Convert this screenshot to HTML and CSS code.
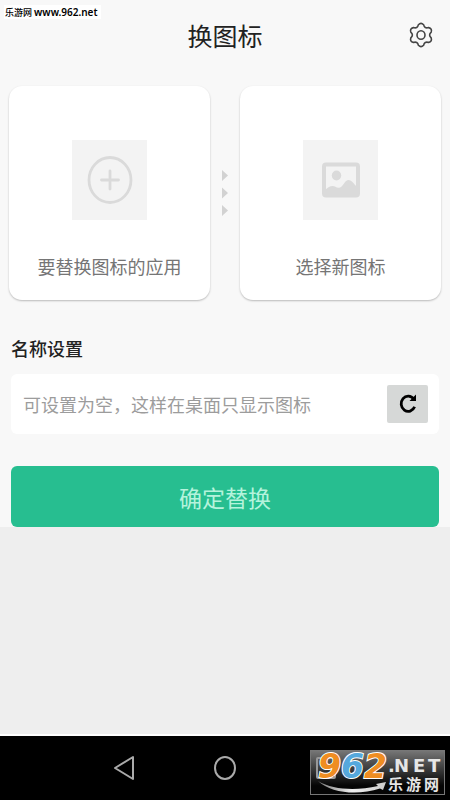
FILE: index.html
```html
<!DOCTYPE html>
<html lang="zh-CN">
<head>
<meta charset="utf-8">
<meta name="viewport" content="width=device-width, initial-scale=1">
<title>换图标</title>
<link rel="stylesheet" href="styles.css">
</head>
<body>
<div class="site-tag">乐游网 <span class="site-url">www.962.net</span></div>
<main class="panel">
  <header class="header">
    <h1 class="title">换图标</h1>
    <button class="settings" type="button" aria-label="设置">
      <svg width="24" height="26" viewBox="0 0 24 26" fill="none" stroke="#444" stroke-width="1.6" stroke-linejoin="round">
        <path d="M9.4 2.7Q12 0 14.600 2.700Q15.500 6.900 19.600 5.600Q23.300 6.500 22.200 10.100Q19 13 22.200 15.900Q23.300 19.500 19.600 20.400Q15.500 19.100 14.600 23.300Q12 26 9.400 23.300Q8.500 19.100 4.400 20.400Q.7 19.500 1.800 15.900Q5 13 1.800 10.100Q.7 6.500 4.400 5.600Q8.500 6.900 9.400 2.700Z"/>
        <ellipse cx="12" cy="13" rx="4" ry="4.3"/>
      </svg>
    </button>
  </header>

  <section class="cards">
    <button class="card" type="button">
      <span class="tile">
        <svg width="46" height="50" viewBox="0 0 46 50" fill="none" stroke="#dadada" stroke-width="2.8" stroke-linecap="round">
          <ellipse cx="23" cy="25" rx="21" ry="22.500"/>
          <path d="M14.500 25H31.500M23 16V34"/>
        </svg>
      </span>
      <span class="card-label">要替换图标的应用</span>
    </button>
    <svg class="arrows" width="6" height="46" viewBox="0 0 6 46" fill="#d2d2d2">
      <path d="M0 0L6 5.500L0 11ZM0 17.500L6 23L0 28.500ZM0 35L6 40.500L0 46Z"/>
    </svg>
    <button class="card" type="button">
      <span class="tile">
        <svg width="38" height="36" viewBox="0 0 38 36">
          <rect x="2" y="2.500" width="34" height="31" rx="2" fill="none" stroke="#dadada" stroke-width="4"/>
          <ellipse cx="14.500" cy="13.500" rx="4.700" ry="5" fill="#dadada"/>
          <path fill="#dadada" d="M3 28C6 25.500 8 24 10.500 24C13 24 15 26.500 18 25.500C21 24.500 23 18 26.500 18C30 18 32 22 35 25V34H3Z"/>
        </svg>
      </span>
      <span class="card-label">选择新图标</span>
    </button>
  </section>

  <form class="form">
    <label class="form-label" for="name">名称设置</label>
    <div class="field">
      <input class="field-input" id="name" type="text" placeholder="可设置为空，这样在桌面只显示图标">
      <button class="reset" type="button" aria-label="重置">
        <svg width="20" height="22" viewBox="0 0 20 22">
          <path d="M15.700 6A7 7.700 0 1 0 16.600 13.800" fill="none" stroke="#000" stroke-width="2.800"/>
          <path d="M18 1.500V8H11.500Z" fill="#000"/>
        </svg>
      </button>
    </div>
    <button class="submit" type="button">确定替换</button>
  </form>
</main>

<nav class="navbar">
  <button class="nav-button" type="button" aria-label="返回">
    <svg width="24" height="26" viewBox="0 0 24 26" fill="none" stroke="#aaa" stroke-width="2" stroke-linejoin="round"><path d="M2 13L20 2V24Z"/></svg>
  </button>
  <button class="nav-button" type="button" aria-label="主页">
    <svg width="24" height="26" viewBox="0 0 24 26" fill="none" stroke="#aaa" stroke-width="2"><ellipse cx="12" cy="13" rx="10" ry="11"/></svg>
  </button>
  <button class="nav-button" type="button" aria-label="最近任务">
    <svg width="24" height="26" viewBox="0 0 24 26" fill="none" stroke="#aaa" stroke-width="2"><rect x="2" y="3" width="19" height="20" rx="1"/></svg>
  </button>
</nav>

<svg class="logo" width="135" height="45" viewBox="0 0 135 45" role="img" aria-label="962.NET 乐游网">
  <defs>
    <linearGradient id="plate" x1="0" y1="0" x2="0" y2="1">
      <stop offset="0" stop-color="#777"/><stop offset=".5" stop-color="#303030"/><stop offset=".8" stop-color="#050505"/>
    </linearGradient>
    <linearGradient id="swoosh" x1="0" y1="0" x2="1" y2="0">
      <stop offset="0" stop-color="#777"/><stop offset=".5" stop-color="#eee"/><stop offset="1" stop-color="#ccc"/>
    </linearGradient>
  </defs>
  <rect x=".5" y=".5" width="134" height="44" fill="url(#plate)" stroke="#777"/>
  <rect x="7" y="8" width="18" height="20" rx="1" fill="none" stroke="#999" stroke-width="2"/>
  <path d="M8 31C23 40 46 41 68 36L66 34L76 32L73 40L70 38.500C47 46 21 43 8 31Z" fill="url(#swoosh)"/>
  <g class="logo-digits">
    <text x="8" y="28" fill="#ef8d22">9</text>
    <text x="31" y="28" fill="#55a8dc">6</text>
    <text x="54" y="28" fill="#ef8d22">2</text>
  </g>
  <g class="logo-net">
    <text x="78" y="22">.</text>
    <text x="84" y="22">N</text>
    <text x="103" y="22">E</text>
    <text x="118" y="22">T</text>
  </g>
  <g class="logo-name">
    <text x="78" y="40">乐</text>
    <text x="96" y="40">游</text>
    <text x="114" y="40">网</text>
  </g>
</svg>
</body>
</html>
```

FILE: styles.css
```css
* {
  box-sizing: border-box;
}

body {
  margin: 0;
  min-height: 100vh;
  display: flex;
  flex-direction: column;
  position: relative;
  background: #eee;
  color: #222;
  font-family: "Liberation Sans", "Noto Sans CJK SC", sans-serif;
}

button {
  border: 0;
  padding: 0;
  background: none;
  font: inherit;
  color: inherit;
  display: flex;
  align-items: center;
  justify-content: center;
}

svg {
  display: block;
  flex: none;
}

.site-tag {
  position: absolute;
  top: 5px;
  left: 4px;
  height: 14px;
  padding: 0 3px 0 1px;
  background: #fff;
  color: #000;
  font: 500 9px/14px "Noto Sans CJK SC", sans-serif;
  white-space: nowrap;
}

.site-url {
  font: 600 10px/14px "Noto Sans", sans-serif;
}

.panel {
  background: #f8f8f8;
}

.header {
  display: grid;
  grid-template-columns: 1fr auto 1fr;
  align-items: center;
  height: 74px;
  padding: 0 17px;
}

.title {
  grid-column: 2;
  margin: 0;
  font-size: 25px;
  font-weight: 400;
  line-height: 36px;
}

.settings {
  justify-self: end;
  margin-bottom: 4px;
}

.cards {
  display: flex;
  align-items: center;
  gap: 12px;
  padding: 12px 9px 0;
}

.card {
  flex: 1;
  flex-direction: column;
  gap: 34px;
  padding: 54px 0 18px;
  border-radius: 13px;
  background: #fff;
  box-shadow: 0 1px 2px rgba(0, 0, 0, 0.25);
}

.tile {
  display: flex;
  align-items: center;
  justify-content: center;
  width: 75px;
  height: 80px;
  background: #f3f3f3;
}

.card-label {
  color: #757575;
  font-size: 18px;
  line-height: 28px;
}

.form {
  display: flex;
  flex-direction: column;
  padding: 36px 11px 0;
}

.form-label {
  font-size: 18px;
  font-weight: 500;
  line-height: 28px;
}

.field {
  display: flex;
  align-items: center;
  gap: 12px;
  height: 60px;
  margin: 10px 0 32px;
  padding: 0 11px 0 12px;
  border-radius: 6px;
  background: #fff;
}

.field-input {
  flex: 1;
  min-width: 0;
  padding: 4px 0 0;
  border: 0;
  background: none;
  font: inherit;
  font-size: 18px;
  line-height: 28px;
}

.field-input::placeholder {
  color: #9c9c9c;
}

.reset {
  width: 41px;
  height: 38px;
  border-radius: 2px;
  background: #d6d8d7;
}

.submit {
  height: 61px;
  border-radius: 6px;
  background: #27be90;
  color: #b5f3dc;
  font-size: 23px;
}

.navbar {
  display: flex;
  justify-content: center;
  align-items: center;
  gap: 52px;
  height: 66px;
  margin-top: auto;
  border-top: 2px solid #fff;
  background: #000;
}

.nav-button {
  width: 48px;
  height: 48px;
}

.logo {
  position: absolute;
  right: 5px;
  bottom: 5px;
}

.logo-digits {
  font: italic 700 33px "DejaVu Sans", sans-serif;
  stroke: #fff;
  stroke-width: 2px;
  paint-order: stroke;
}

.logo-net {
  fill: #e6e6e6;
  font: 700 18px "DejaVu Sans", sans-serif;
}

.logo-name {
  fill: #e6e6e6;
  font: 700 15px "Noto Sans CJK SC", sans-serif;
}
```
